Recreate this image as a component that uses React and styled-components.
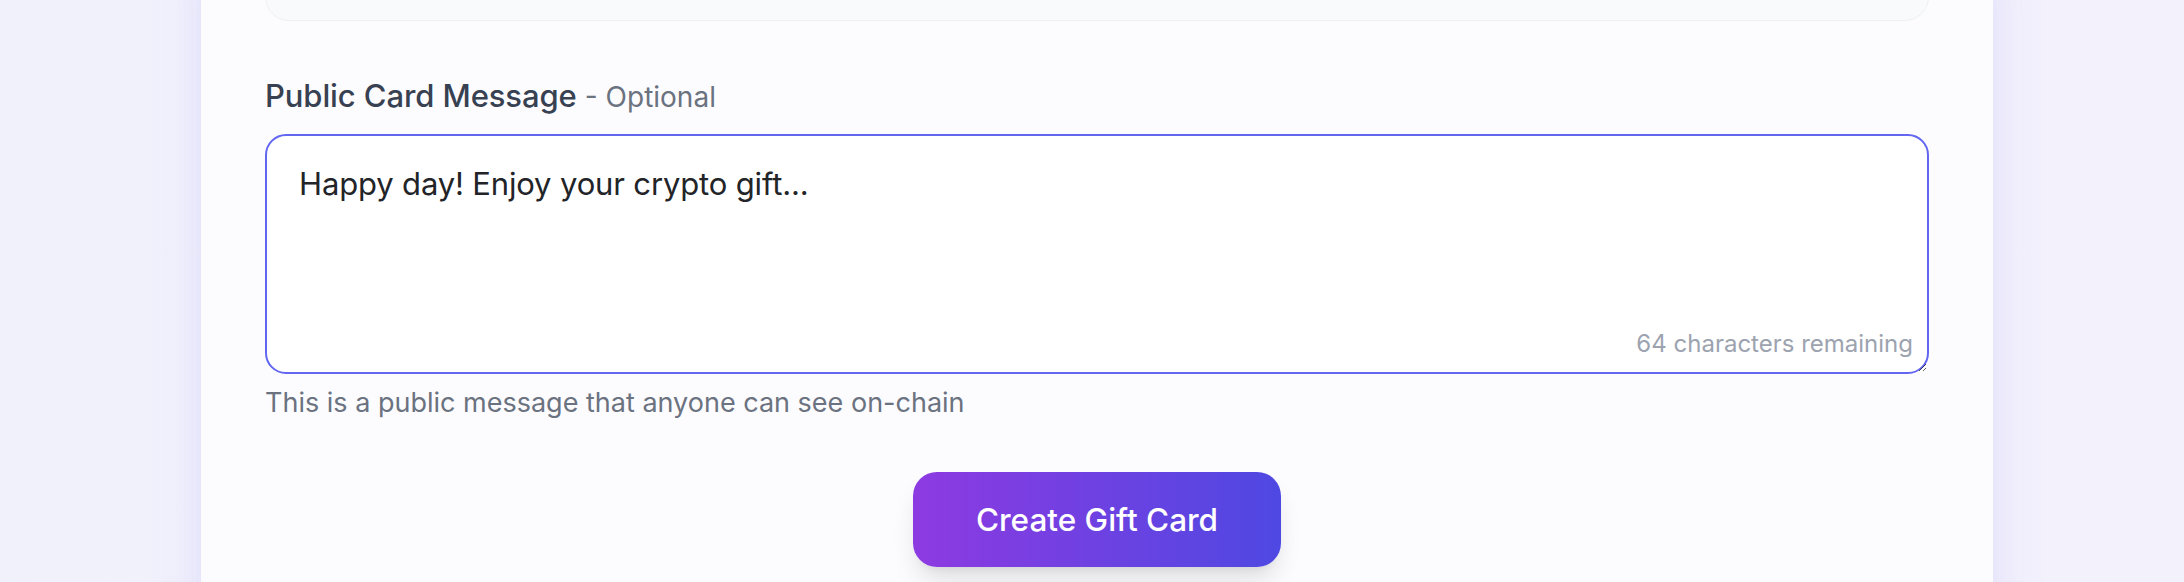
import React, { useState } from "react";
import styled, { createGlobalStyle } from "styled-components";

// ******************
// component
// ******************
const MAX_LENGTH = 100;

const App = () => {
	const [message, setMessage] = useState("Happy day! Enjoy your crypto gift...");
	const remaining = MAX_LENGTH - message.length;

	return (
		<>
			<GlobalStyle />
			<Page>
				<Card>
					{/* previous field, scrolled mostly out of view */}
					<PrevPanel />
					<Field>
						<Label htmlFor="public-message">
							Public Card Message <Optional>- Optional</Optional>
						</Label>
						<AreaWrap>
							<MessageArea
								id="public-message"
								value={message}
								maxLength={MAX_LENGTH}
								onChange={(e) => setMessage(e.target.value)}
							/>
							<Counter>{remaining} characters remaining</Counter>
						</AreaWrap>
						<Hint>This is a public message that anyone can see on-chain</Hint>
					</Field>
					<Actions>
						<CreateButton type="button">Create Gift Card</CreateButton>
					</Actions>
				</Card>
			</Page>
		</>
	);
};

export default App;

// ******************
// styles
// ******************
const GlobalStyle = createGlobalStyle`
	html, body {
		margin: 0;
		height: 100%;
		overflow: hidden;
		background: #f3f3fd;
	}
	body {
		font-family: Inter, "Noto Sans", "Liberation Sans", sans-serif;
		-webkit-font-smoothing: antialiased;
	}
	* {
		box-sizing: border-box;
	}
`;
const Page = styled.div`
	display: flex;
	justify-content: center;
	min-height: 100vh;
	padding-left: 10px;
	background: linear-gradient(90deg, #f1f1fc 0%, #f4f3fd 50%, #f3f1fc 100%);
`;
const Card = styled.div`
	display: flex;
	flex-direction: column;
	width: 1792px;
	margin-top: -80px;
	padding: 0 64px 64px;
	background: #fcfcff;
	box-shadow: 0 30px 60px rgba(79, 70, 229, 0.07), 0 0 30px rgba(99, 102, 241, 0.06);
`;
const PrevPanel = styled.div`
	height: 101px;
	background: #f9fafb;
	border: 1px solid #eef0f3;
	border-radius: 24px;
`;
const Field = styled.div`
	display: flex;
	flex-direction: column;
	margin-top: 50px;
`;
const Label = styled.label`
	font-size: 31px;
	line-height: 49px;
	font-weight: 500;
	letter-spacing: -0.1px;
	color: #374151;
`;
const Optional = styled.span`
	font-size: 28px;
	font-weight: 400;
	letter-spacing: 0;
	color: #6b7280;
`;
const AreaWrap = styled.div`
	position: relative;
	margin-top: 12px;
`;
const MessageArea = styled.textarea`
	display: block;
	width: 100%;
	height: 240px;
	padding: 23px 32px;
	font-family: inherit;
	font-size: 31px;
	line-height: 49px;
	letter-spacing: -0.15px;
	color: #222428;
	background: #ffffff;
	border: 2px solid #6366f1;
	border-radius: 21px;
	outline: none;
`;
const Counter = styled.span`
	position: absolute;
	right: 16px;
	bottom: 13px;
	font-size: 24px;
	line-height: 35px;
	color: #9ca3af;
	pointer-events: none;
`;
const Hint = styled.p`
	margin: 9px 0 0;
	font-size: 27px;
	line-height: 40px;
	color: #6b7280;
`;
const Actions = styled.div`
	display: flex;
	justify-content: center;
	margin-top: 49px;
`;
const CreateButton = styled.button`
	height: 95px;
	padding: 0 63px;
	font-family: inherit;
	font-size: 31.5px;
	line-height: 49px;
	font-weight: 500;
	color: #ffffff;
	border: none;
	border-radius: 24px;
	background: linear-gradient(90deg, #8d3ae1 0%, #4f48e2 100%);
	box-shadow: 0 17px 26px -5px rgba(0, 0, 0, 0.12), 0 7px 10px -7px rgba(0, 0, 0, 0.1);
	cursor: pointer;
`;
